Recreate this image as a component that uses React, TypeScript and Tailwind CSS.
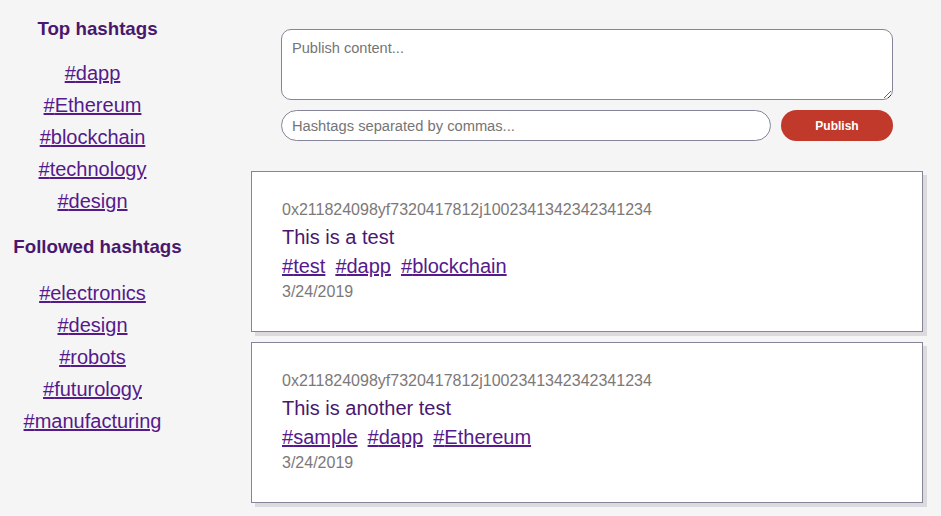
import React from 'react';

const topTags = ['dapp', 'Ethereum', 'blockchain', 'technology', 'design'];
const followedTags = ['electronics', 'design', 'robots', 'futurology', 'manufacturing'];

const posts = [
  {
    author: '0x211824098yf7320417812j1002341342342341234',
    content: 'This is a test',
    tags: ['test', 'dapp', 'blockchain'],
    date: '3/24/2019',
  },
  {
    author: '0x211824098yf7320417812j1002341342342341234',
    content: 'This is another test',
    tags: ['sample', 'dapp', 'Ethereum'],
    date: '3/24/2019',
  },
];

const TagList = ({ tags }: { tags: string[] }) => (
  <ul className="flex flex-col items-center pr-[10px]">
    {tags.map((tag) => (
      <li key={tag} className="text-[20px] leading-[32px]">
        <a href="#" className="text-[#551a8b] underline">
          #{tag}
        </a>
      </li>
    ))}
  </ul>
);

export default function App() {
  return (
    <div className="flex min-h-screen bg-[#f5f5f5] font-['Liberation_Sans',Arial,sans-serif]">
      <aside className="w-[195px] shrink-0 pt-[17px] text-center">
        <h3 className="text-[18.72px] font-bold leading-[24px] text-[#4a176e]">Top hashtags</h3>
        <div className="mt-[16px]">
          <TagList tags={topTags} />
        </div>
        <h3 className="mt-[18px] text-[18.72px] font-bold leading-[24px] text-[#4a176e]">
          Followed hashtags
        </h3>
        <div className="mt-[18px]">
          <TagList tags={followedTags} />
        </div>
      </aside>

      <main className="ml-[56px] mr-[18px] flex-1">
        <div className="px-[30px] pt-[29px]">
          <textarea
            placeholder="Publish content..."
            className="block h-[71px] w-full rounded-[10px] border border-[#85859a] bg-white px-[10px] py-[8px] text-[14.6px] placeholder:text-[#757575] focus:outline-none"
          />
          <div className="mt-[10px] flex gap-[10px]">
            <input
              placeholder="Hashtags separated by commas..."
              className="h-[31px] flex-1 rounded-full border border-[#85859a] bg-white px-[10px] text-[14.7px] placeholder:text-[#757575] focus:outline-none"
            />
            <button className="h-[31px] w-[112px] rounded-full bg-[#c0392b] text-[12px] font-bold text-white">
              Publish
            </button>
          </div>
        </div>

        <div className="mt-[30px] flex flex-col gap-[10px] pb-[10px]">
          {posts.map((post, i) => (
            <div
              key={i}
              className="border border-[#85859a] bg-white pb-[25px] pl-[30px] pt-[29px] shadow-[4px_4px_0_#dcdadc]"
            >
              <div className="text-[16px] leading-[18px] text-[#7d7878]">{post.author}</div>
              <div className="text-[20px] leading-[36px] text-[#4a176e]">{post.content}</div>
              <div className="flex text-[20px] leading-[22px]">
                {post.tags.map((tag) => (
                  <a key={tag} href="#" className="mr-[10px] text-[#551a8b] underline">
                    #{tag}
                  </a>
                ))}
              </div>
              <div className="pt-[1px] text-[16px] leading-[28px] text-[#7d7878]">{post.date}</div>
            </div>
          ))}
        </div>
      </main>
    </div>
  );
}
